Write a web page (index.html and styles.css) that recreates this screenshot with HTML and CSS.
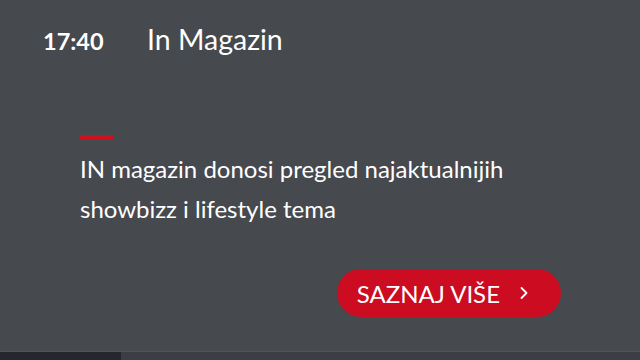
FILE: index.html
```html
<!DOCTYPE html>
<html lang="hr">
<head>
  <meta charset="UTF-8">
  <title>In Magazin</title>
  <link rel="stylesheet" href="styles.css">
</head>
<body>
  <div class="screen">
    <header class="top">
      <span class="time">17:40</span>
      <span class="title">In Magazin</span>
    </header>
    <div class="info">
      <div class="accent"></div>
      <p class="desc">IN magazin donosi pregled najaktualnijih<br>showbizz i lifestyle tema</p>
    </div>
    <div class="actions">
      <button class="more">SAZNAJ VIŠE
        <svg width="10" height="14" viewBox="0 0 10 14"><path d="M2.5 2 L7.5 7 L2.5 12" fill="none" stroke="#fff" stroke-width="1.8" stroke-linecap="round" stroke-linejoin="round"/></svg>
      </button>
    </div>
    <div class="progress"><div class="done" style="width:121px"></div></div>
  </div>
</body>
</html>
```

FILE: styles.css
```css
html, body { margin: 0; padding: 0; }
body { background: #46494e; font-family: Lato, "Open Sans", sans-serif; color: #fff; }
.screen { width: 640px; height: 360px; display: flex; flex-direction: column; }
.top { display: flex; align-items: baseline; padding: 22px 0 0 43px; height: 40px; }
.time { font-weight: 700; font-size: 23.5px; width: 104px; }
.title { font-size: 28.5px; }
.info { padding: 73px 0 0 80px; }
.accent { width: 34px; height: 4px; background: #d0101e; }
.desc { margin: 10px 0 0; font-size: 24px; line-height: 40px; }
.actions { display: flex; justify-content: flex-end; padding: 40px 79px 0 0; }
.more { display: flex; align-items: center; gap: 19px; height: 48px; padding: 0 32px 0 20px; border: none; border-radius: 24px; background: #cc0c20; color: #fff; font-family: Lato, sans-serif; font-size: 24px; }
.progress { margin-top: auto; height: 8px; background: #3b3e42; border-top: 1px solid #505358; }
.done { height: 8px; background: #24272b; }
```
